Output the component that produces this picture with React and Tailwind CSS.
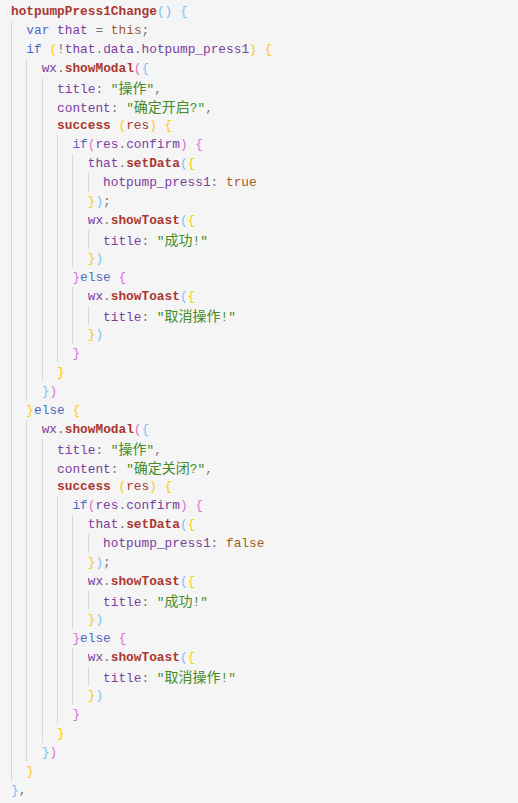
const COLORS = {
  k: "text-[#4b69c6]",
  v: "text-[#7a3e9d]",
  f: "text-[#aa3731] font-bold",
  r: "text-[#aa3731]",
  s: "text-[#448c27]",
  c: "text-[#9c5d27]",
  p: "text-[#777777]",
  y: "text-[#ffcc00]",
  m: "text-[#da70d6]",
  b: "text-[#7cc0f8]",
  t: "",
};

const toast = (lvl, msg) => [
  [lvl, [["v", "wx"], ["p", "."], ["f", "showToast"], ["b", "("], ["y", "{"]]],
  [lvl + 1, [["v", "title"], ["p", ":"], ["t", " "], ["s", `"${msg}"`]]],
  [lvl, [["y", "}"], ["b", ")"]]],
];

const modal = (lvl, msg, val) => [
  [lvl, [["v", "wx"], ["p", "."], ["f", "showModal"], ["m", "("], ["b", "{"]]],
  [lvl + 1, [["v", "title"], ["p", ":"], ["t", " "], ["s", '"操作"'], ["p", ","]]],
  [lvl + 1, [["v", "content"], ["p", ":"], ["t", " "], ["s", `"${msg}"`], ["p", ","]]],
  [lvl + 1, [["f", "success"], ["t", " "], ["y", "("], ["r", "res"], ["y", ")"], ["t", " "], ["y", "{"]]],
  [lvl + 2, [["k", "if"], ["m", "("], ["v", "res"], ["p", "."], ["v", "confirm"], ["m", ")"], ["t", " "], ["m", "{"]]],
  [lvl + 3, [["v", "that"], ["p", "."], ["f", "setData"], ["b", "("], ["y", "{"]]],
  [lvl + 4, [["v", "hotpump_press1"], ["p", ":"], ["t", " "], ["c", val]]],
  [lvl + 3, [["y", "}"], ["b", ")"], ["p", ";"]]],
  ...toast(lvl + 3, "成功!"),
  [lvl + 2, [["m", "}"], ["k", "else"], ["t", " "], ["m", "{"]]],
  ...toast(lvl + 3, "取消操作!"),
  [lvl + 2, [["m", "}"]]],
  [lvl + 1, [["y", "}"]]],
  [lvl, [["b", "}"], ["m", ")"]]],
];

const LINES = [
  [0, [["f", "hotpumpPress1Change"], ["b", "("], ["b", ")"], ["t", " "], ["b", "{"]]],
  [1, [["k", "var"], ["t", " "], ["v", "that"], ["t", " "], ["p", "="], ["t", " "], ["c", "this"], ["p", ";"]]],
  [1, [["k", "if"], ["t", " "], ["y", "("], ["p", "!"], ["v", "that"], ["p", "."], ["v", "data"], ["p", "."], ["v", "hotpump_press1"], ["y", ")"], ["t", " "], ["y", "{"]]],
  ...modal(2, "确定开启?", "true"),
  [1, [["y", "}"], ["k", "else"], ["t", " "], ["y", "{"]]],
  ...modal(2, "确定关闭?", "false"),
  [1, [["y", "}"]]],
  [0, [["b", "}"], ["p", ","]]],
];

function Str({ text }) {
  // chinese glyphs sit a bit wider than the mono font
  const parts = text.split(/([\u4e00-\u9fff]+)/);
  return parts.map((part, i) =>
    i % 2 === 1 ? (
      <span key={i} className="text-[14px] font-['Noto_Sans_CJK_SC',sans-serif]">
        {part}
      </span>
    ) : (
      part
    )
  );
}

export default function App() {
  return (
    <div className="min-h-screen bg-[#f5f5f5] pt-[2px] pl-[11px] font-['Liberation_Mono','Noto_Sans_CJK_SC',monospace] text-[12.8px] leading-[19px] whitespace-pre">
      {LINES.map(([indent, tokens], i) => (
        <div key={i} className="flex h-[19px]">
          {Array.from({ length: indent }).map((_, j) => (
            <span key={j} className="w-[2ch] shrink-0 border-l border-[#d9d9d9]" />
          ))}
          <span>
            {tokens.map(([type, text], j) => (
              <span key={j} className={COLORS[type]}>
                {type === "s" ? <Str text={text} /> : text}
              </span>
            ))}
          </span>
        </div>
      ))}
    </div>
  );
}
